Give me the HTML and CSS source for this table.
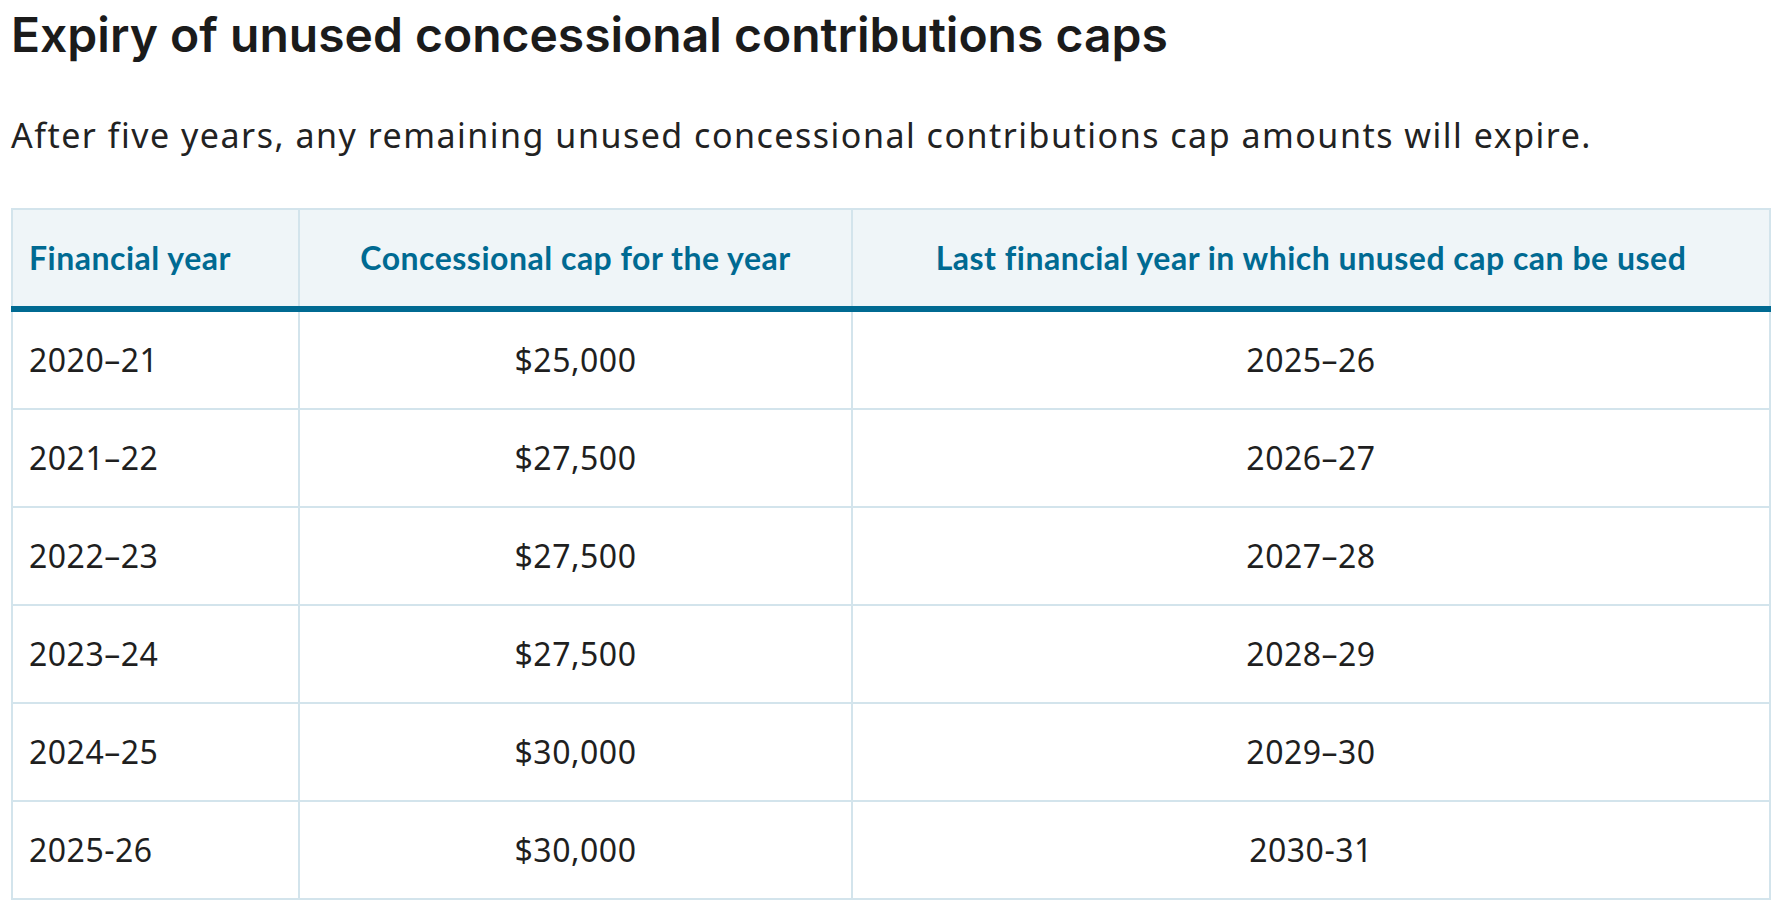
FILE: index.html
```html
<!DOCTYPE html>
<html lang="en">
<head>
<meta charset="utf-8">
<title>Expiry of unused concessional contributions caps</title>
<link rel="stylesheet" href="styles.css">
</head>
<body>
<main class="content">
  <h1 class="title">Expiry of unused concessional contributions caps</h1>
  <p class="intro">After five years, any remaining unused concessional contributions cap amounts will expire.</p>
  <table class="caps">
    <colgroup>
      <col class="col-year">
      <col class="col-cap">
      <col class="col-last">
    </colgroup>
    <thead>
      <tr>
        <th class="left">Financial year</th>
        <th>Concessional cap for the year</th>
        <th>Last financial year in which unused cap can be used</th>
      </tr>
    </thead>
    <tbody>
      <tr><td class="left">2020–21</td><td>$25,000</td><td>2025–26</td></tr>
      <tr><td class="left">2021–22</td><td>$27,500</td><td>2026–27</td></tr>
      <tr><td class="left">2022–23</td><td>$27,500</td><td>2027–28</td></tr>
      <tr><td class="left">2023–24</td><td>$27,500</td><td>2028–29</td></tr>
      <tr><td class="left">2024–25</td><td>$30,000</td><td>2029–30</td></tr>
      <tr><td class="left">2025-26</td><td>$30,000</td><td>2030-31</td></tr>
    </tbody>
  </table>
</main>
</body>
</html>
```

FILE: styles.css
```css
html, body {
  margin: 0;
  padding: 0;
  background: #ffffff;
}

.content {
  padding: 0 13px 0 11px;
}

.title {
  font-family: Inter, "Noto Sans", sans-serif;
  font-weight: 600;
  font-size: 48px;
  line-height: 70px;
  letter-spacing: 0;
  color: #1b1b1b;
  margin: 0;
}

.intro {
  font-family: "Noto Sans", sans-serif;
  font-size: 34px;
  line-height: 48px;
  letter-spacing: 1.5px;
  color: #222222;
  margin: 41px 0 49px;
}

.caps {
  width: 100%;
  border-collapse: collapse;
  font-family: "Noto Sans", sans-serif;
  font-size: 32px;
  letter-spacing: 0.5px;
  color: #1f1f1f;
}

.col-year { width: 287px; }
.col-cap { width: 553px; }

.caps th,
.caps td {
  border: 2px solid #d3e4ec;
  padding: 24px 16px;
  line-height: 48px;
  text-align: center;
}

.caps th {
  background: #eff5f8;
  color: #006a92;
  font-family: Lato, "Noto Sans", sans-serif;
  font-weight: 700;
  font-size: 32px;
  letter-spacing: 0.5px;
  border-bottom: 6px solid #006a92;
}

.caps .left {
  text-align: left;
}
```
